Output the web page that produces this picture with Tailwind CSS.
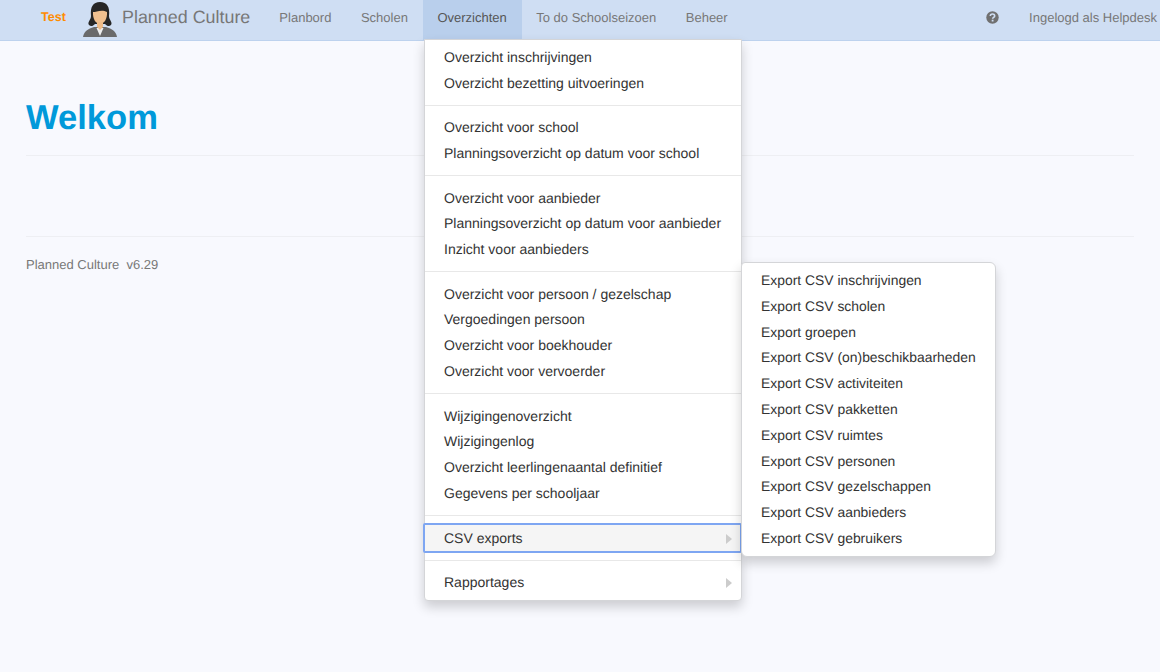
<!DOCTYPE html>
<html>
<head>
<meta charset="utf-8">
<script src="https://cdn.jsdelivr.net/npm/@tailwindcss/browser@4"></script>
</head>
<body class="relative w-[1160px] h-[672px] overflow-hidden bg-[#f8f9fe] font-['Liberation_Sans',Arial,sans-serif] text-[#333] [text-rendering:geometricPrecision]">
<nav class="h-[41px] bg-[#cfdef3] border-b border-[#bdd2ee] flex items-stretch text-[13px] text-[#777]">
  <span class="ml-[41px] w-[25px] self-center font-bold text-[#ff8c00] text-[12.6px] -mt-[5px]">Test</span>
  <svg class="ml-[16px] mt-[1px] w-[36px] h-[37px]" viewBox="0 0 36 37">
    <path d="M1 36 C2 30 6 28 12 26 L24 26 C30 28 34 30 35 36 Z" fill="#6a6a6a"/>
    <path d="M14.5 27 L18 35 L21.5 27 Z" fill="#eee"/>
    <path d="M9 15 C8 6 11 1 18 1 C25 1 28 6 27 15 C27 19 31 21 29 24 C27 26 25 25 23 23 L13 23 C11 25 9 26 7 24 C5 21 9 19 9 15 Z" fill="#262626"/>
    <path d="M11 11 C14 11 20 8 25 11 C25.500 18 22 23 18 23 C14 23 10.500 18 11 11 Z" fill="#f0c08f"/>
    <path d="M15 21 L21 21 L21 26 L18 29 L15 26 Z" fill="#eebb88"/>
  </svg>
  <span class="ml-[4px] self-center text-[17.9px] -mt-[5px] text-[#777]">Planned Culture</span>
  <div class="ml-[14.3px] flex items-stretch">
    <span class="px-[14.75px] pt-[8px]">Planbord</span>
    <span class="px-[14.75px] pt-[8px]">Scholen</span>
    <span class="px-[14.75px] pt-[8px] bg-[#b9cfec] text-[#555]">Overzichten</span>
    <span class="px-[14.75px] pt-[8px]">To do Schoolseizoen</span>
    <span class="px-[14.75px] pt-[8px]">Beheer</span>
  </div>
  <div class="ml-auto flex items-stretch">
    <svg class="mt-[10.5px] w-[13px] h-[13px]" viewBox="0 0 13 13">
      <circle cx="6.5" cy="6.5" r="6.2" fill="#707070"/>
      <path d="M4.300 5 C4.400 2.400 8.700 2.400 8.700 4.900 C8.700 6.400 6.600 6.300 6.600 7.700" fill="none" stroke="#cfdef3" stroke-width="1.6"/>
      <rect x="5.700" y="8.700" width="1.800" height="1.800" fill="#cfdef3"/>
    </svg>
    <span class="ml-[30px] mr-[3px] pt-[8px]">Ingelogd als Helpdesk</span>
  </div>
</nav>

<main class="px-[26px]">
  <h1 class="mt-[56px] text-[34.6px] leading-[42px] font-bold text-[#0099da]">Welkom</h1>
  <hr class="mt-[16px] border-[#eeeff3]">
  <hr class="mt-[80px] border-[#eeeff3]">
  <p class="mt-[19px] text-[13px] leading-[18px] text-[#777]">Planned Culture&nbsp; v6.29</p>
</main>

<div class="absolute left-[424px] top-[39px] w-[318px] h-[562px] py-[5px] bg-white border border-[#d4d5d8] rounded-b-[4px] shadow-[0_6px_12px_rgba(0,0,0,0.18)] text-[14px] leading-[25.8px]">
  <div class="pl-[19px]">Overzicht inschrijvingen</div>
  <div class="pl-[19px]">Overzicht bezetting uitvoeringen</div>
  <div class="mt-[8.3px] mb-[9.4px] h-px bg-[#e8e8e8]"></div>
  <div class="pl-[19px]">Overzicht voor school</div>
  <div class="pl-[19px]">Planningsoverzicht op datum voor school</div>
  <div class="mt-[8.3px] mb-[9.4px] h-px bg-[#e8e8e8]"></div>
  <div class="pl-[19px]">Overzicht voor aanbieder</div>
  <div class="pl-[19px]">Planningsoverzicht op datum voor aanbieder</div>
  <div class="pl-[19px]">Inzicht voor aanbieders</div>
  <div class="mt-[8.3px] mb-[9.4px] h-px bg-[#e8e8e8]"></div>
  <div class="pl-[19px]">Overzicht voor persoon / gezelschap</div>
  <div class="pl-[19px]">Vergoedingen persoon</div>
  <div class="pl-[19px]">Overzicht voor boekhouder</div>
  <div class="pl-[19px]">Overzicht voor vervoerder</div>
  <div class="mt-[8.3px] mb-[9.4px] h-px bg-[#e8e8e8]"></div>
  <div class="pl-[19px]">Wijzigingenoverzicht</div>
  <div class="pl-[19px]">Wijzigingenlog</div>
  <div class="pl-[19px]">Overzicht leerlingenaantal definitief</div>
  <div class="pl-[19px]">Gegevens per schooljaar</div>
  <div class="mt-[8.3px] mb-[9.4px] h-px bg-[#e8e8e8]"></div>
  <div class="relative -ml-[2px] -mr-px -my-[2.1px] pl-[19px] pt-[1px] h-[30px] bg-[#f5f5f5] border-[2px] border-[#7ea6f2] box-border rounded-[2px] flex items-center justify-between pr-[8px]">
    <span>CSV exports</span>
    <svg class="w-[6px] h-[10px]" viewBox="0 0 6 10"><path d="M0 0 L6 5 L0 10 Z" fill="#ccc"/></svg>
  </div>
  <div class="mt-[8.3px] mb-[9.4px] h-px bg-[#e8e8e8]"></div>
  <div class="-mx-px pl-[20px] h-[25.8px] flex items-center justify-between pr-[10px]">
    <span>Rapportages</span>
    <svg class="w-[6px] h-[10px]" viewBox="0 0 6 10"><path d="M0 0 L6 5 L0 10 Z" fill="#ccc"/></svg>
  </div>
</div>

<div class="absolute left-[741px] top-[262px] w-[255px] h-[295px] py-[5px] bg-white border border-[#d4d5d8] rounded-r-[6px] rounded-bl-[6px] rounded-tl-[4px] shadow-[0_6px_12px_rgba(0,0,0,0.18)] text-[13.9px] leading-[25.8px]">
  <div class="pl-[19px]">Export CSV inschrijvingen</div>
  <div class="pl-[19px]">Export CSV scholen</div>
  <div class="pl-[19px]">Export groepen</div>
  <div class="pl-[19px]">Export CSV (on)beschikbaarheden</div>
  <div class="pl-[19px]">Export CSV activiteiten</div>
  <div class="pl-[19px]">Export CSV pakketten</div>
  <div class="pl-[19px]">Export CSV ruimtes</div>
  <div class="pl-[19px]">Export CSV personen</div>
  <div class="pl-[19px]">Export CSV gezelschappen</div>
  <div class="pl-[19px]">Export CSV aanbieders</div>
  <div class="pl-[19px]">Export CSV gebruikers</div>
</div>
</body>
</html>
